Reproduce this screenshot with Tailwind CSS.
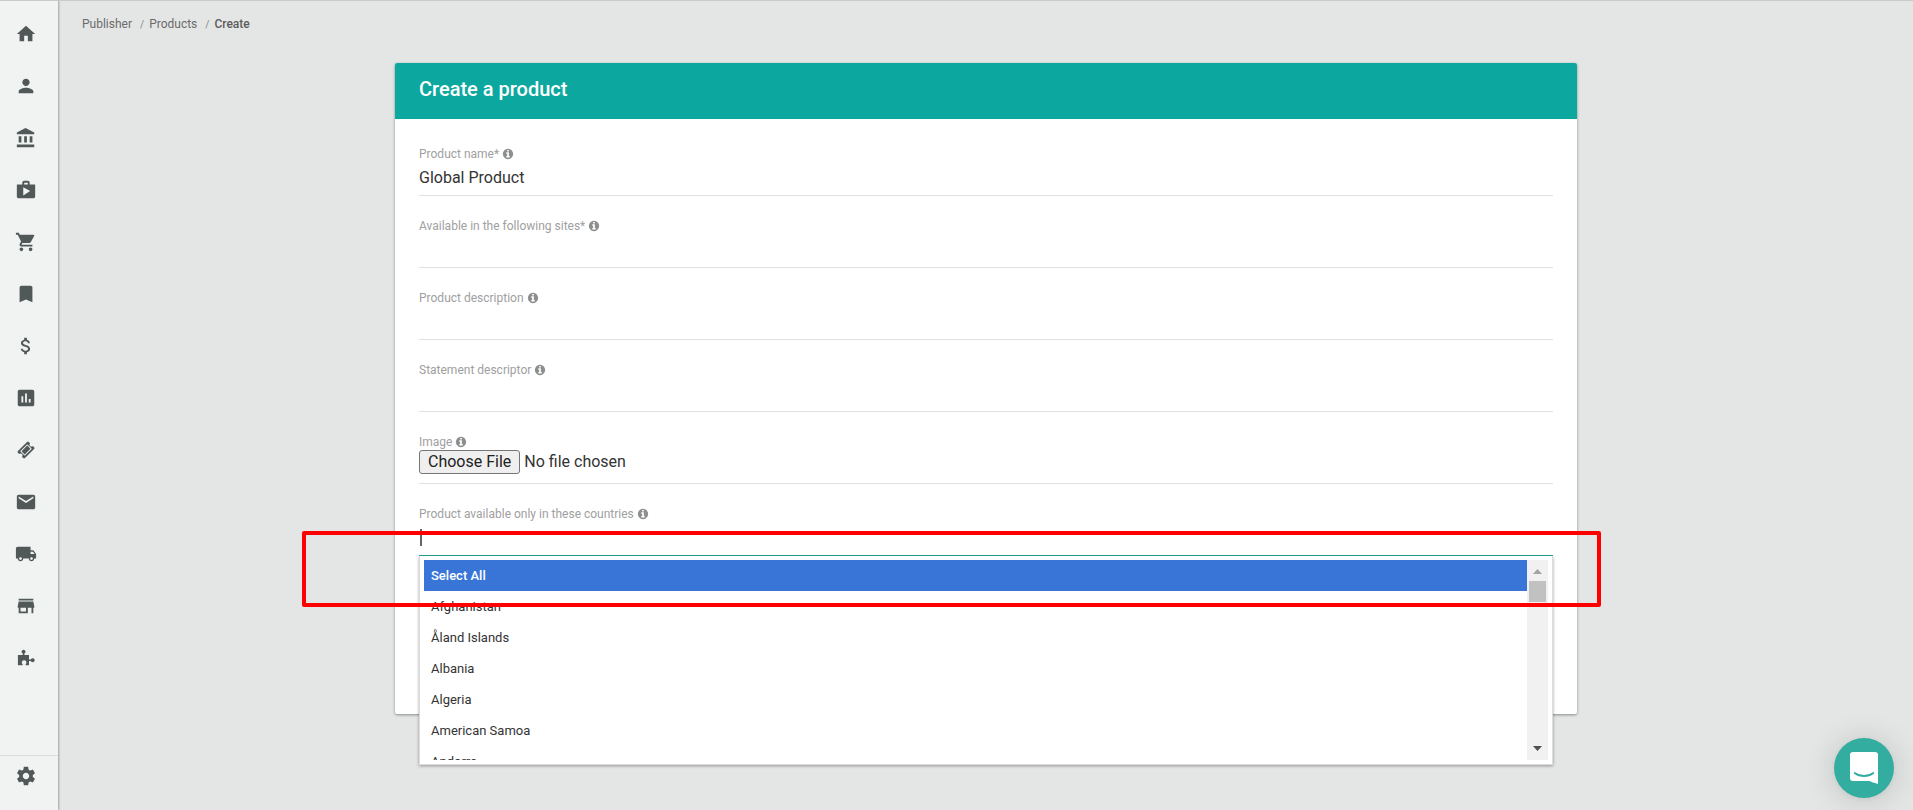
<!DOCTYPE html>
<html lang="en">
<head>
    <meta charset="UTF-8">
    <meta name="viewport" content="width=device-width, initial-scale=1.0">
    <title>Create a product</title>
    <!-- Tailwind CSS CDN -->
    <script src="https://cdn.jsdelivr.net/npm/@tailwindcss/browser@4"></script>
</head>
<body class="flex h-screen overflow-hidden bg-[#e4e6e5] font-[Roboto,sans-serif] text-[#333]">

    <!-- Shared info icon -->
    <svg class="hidden">
        <symbol id="info" viewBox="0 0 1792 1792">
            <path d="M1152 1376v-160q0-14-9-23t-23-9h-96v-512q0-14-9-23t-23-9h-320q-14 0-23 9t-9 23v160q0 14 9 23t23 9h96v320h-96q-14 0-23 9t-9 23v160q0 14 9 23t23 9h448q14 0 23-9t9-23zm-128-896v-160q0-14-9-23t-23-9h-192q-14 0-23 9t-9 23v160q0 14 9 23t23 9h192q14 0 23-9t9-23zm640 416q0 209-103 385.5t-279.5 279.5-385.5 103-385.5-103-279.5-279.5-103-385.5 103-385.5 279.5-279.5 385.5-103 385.5 103 279.5 279.5 103 385.5z"/>
        </symbol>
    </svg>

    <!-- Line under the top bar -->
    <div class="fixed inset-x-0 top-0 z-30 h-px bg-[#c9cbca]"></div>

    <!-- Sidebar -->
    <nav class="flex w-[58px] shrink-0 flex-col bg-[#f1f3f2] pt-2 text-[#515958] shadow-[1px_0_2px_rgba(0,0,0,0.3)]">
        <a href="#" aria-label="Home" class="flex h-[52px] items-center pl-[15px]">
            <svg class="size-[22px]" viewBox="0 0 24 24" fill="currentColor"><path d="M10 20v-6h4v6h5v-8h3L12 3 2 12h3v8z"/></svg>
        </a>
        <a href="#" aria-label="Users" class="flex h-[52px] items-center pl-[15px]">
            <svg class="size-[22px]" viewBox="0 0 24 24" fill="currentColor"><path d="M12 12c2.21 0 4-1.79 4-4s-1.79-4-4-4-4 1.790-4 4 1.790 4 4 4zm0 2c-2.670 0-8 1.340-8 4v2h16v-2c0-2.660-5.330-4-8-4z"/></svg>
        </a>
        <a href="#" aria-label="Accounts" class="flex h-[52px] items-center pl-[15px]">
            <svg class="size-[22px]" viewBox="0 0 24 24" fill="currentColor"><path d="M4 10v7h3v-7H4zm6 0v7h3v-7h-3zM2 22h19v-3H2v3zm14-12v7h3v-7h-3zm-4.500-9L2 6v2h19V6l-9.500-5z"/></svg>
        </a>
        <a href="#" aria-label="Shop" class="flex h-[52px] items-center pl-[15px]">
            <svg class="size-[22px]" viewBox="0 0 24 24" fill="currentColor"><path d="M16 6V4c0-1.110-.89-2-2-2h-4c-1.110 0-2 .89-2 2v2H2v13c0 1.110.89 2 2 2h16c1.110 0 2-.89 2-2V6h-6zm-6-2h4v2h-4V4zM9 18V9l7.500 4L9 18z"/></svg>
        </a>
        <a href="#" aria-label="Cart" class="flex h-[52px] items-center pl-[15px]">
            <svg class="size-[22px]" viewBox="0 0 24 24" fill="currentColor"><path d="M7 18c-1.100 0-1.990.9-1.990 2S5.900 22 7 22s2-.9 2-2-.9-2-2-2zM1 2v2h2l3.600 7.590-1.350 2.450c-.16.28-.25.61-.25.96 0 1.100.9 2 2 2h12v-2H7.420c-.14 0-.25-.11-.25-.25l.03-.12.9-1.630h7.450c.75 0 1.410-.41 1.750-1.030l3.580-6.490A1.003 1.003 0 0020 4H5.210l-.94-2H1zm16 16c-1.100 0-1.990.9-1.990 2s.89 2 1.990 2 2-.9 2-2-.9-2-2-2z"/></svg>
        </a>
        <a href="#" aria-label="Bookmarks" class="flex h-[52px] items-center pl-[15px]">
            <svg class="size-[22px]" viewBox="0 0 24 24" fill="currentColor"><path d="M17 3H7c-1.100 0-1.990.9-1.990 2L5 21l7-3 7 3V5c0-1.100-.9-2-2-2z"/></svg>
        </a>
        <a href="#" aria-label="Payments" class="flex h-[52px] items-center pl-[15px]">
            <svg class="size-[22px]" viewBox="0 0 24 24" fill="currentColor"><path d="M11.800 10.900c-2.270-.59-3-1.200-3-2.150 0-1.090 1.010-1.850 2.700-1.850 1.780 0 2.440.85 2.500 2.100h2.210c-.07-1.720-1.120-3.300-3.210-3.810V3h-3v2.160c-1.940.42-3.500 1.680-3.500 3.610 0 2.310 1.910 3.460 4.700 4.130 2.500.6 3 1.480 3 2.410 0 .69-.49 1.790-2.700 1.790-2.060 0-2.870-.92-2.980-2.100h-2.200c.12 2.190 1.760 3.420 3.680 3.830V21h3v-2.150c1.950-.37 3.500-1.500 3.500-3.550 0-2.840-2.430-3.810-4.700-4.400z"/></svg>
        </a>
        <a href="#" aria-label="Reports" class="flex h-[52px] items-center pl-[15px]">
            <svg class="size-[22px]" viewBox="0 0 24 24" fill="currentColor"><path d="M19 3H5c-1.100 0-2 .9-2 2v14c0 1.100.9 2 2 2h14c1.100 0 2-.9 2-2V5c0-1.100-.9-2-2-2zM9 17H7v-7h2v7zm4 0h-2V7h2v10zm4 0h-2v-4h2v4z"/></svg>
        </a>
        <a href="#" aria-label="Vouchers" class="flex h-[52px] items-center pl-[17px]">
            <svg class="size-[18px]" viewBox="0 0 1792 1792" fill="currentColor"><path d="M1024 452l316 316-572 572-316-316zm-211 979l618-618q19-19 19-45t-19-45l-362-362q-18-18-45-18t-45 18l-618 618q-19 19-19 45t19 45l362 362q18 18 45 18t45-18zm889-637l-907 908q-37 37-90.500 37t-90.500-37l-126-126q56-56 56-136t-56-136-136-56-136 56l-125-126q-37-37-37-90.500t37-90.500l907-906q37-37 90.500-37t90.500 37l125 125q-56 56-56 136t56 136 136 56 136-56l126 125q37 37 37 90.500t-37 90.500z"/></svg>
        </a>
        <a href="#" aria-label="Mail" class="flex h-[52px] items-center pl-[15px]">
            <svg class="size-[22px]" viewBox="0 0 24 24" fill="currentColor"><path d="M20 4H4c-1.100 0-1.990.9-1.990 2L2 18c0 1.100.9 2 2 2h16c1.100 0 2-.9 2-2V6c0-1.100-.9-2-2-2zm0 4l-8 5-8-5V6l8 5 8-5v2z"/></svg>
        </a>
        <a href="#" aria-label="Shipping" class="flex h-[52px] items-center pl-[15px]">
            <svg class="size-[22px]" viewBox="0 0 24 24" fill="currentColor"><path d="M20 8h-3V4H3c-1.100 0-2 .9-2 2v11h2c0 1.660 1.340 3 3 3s3-1.340 3-3h6c0 1.660 1.340 3 3 3s3-1.340 3-3h2v-5l-3-4zM6 18.500c-.83 0-1.500-.67-1.500-1.500s.67-1.500 1.500-1.500 1.500.67 1.500 1.500-.67 1.500-1.500 1.500zm13.500-9l1.960 2.500H17V9.500h2.500zm-1.500 9c-.83 0-1.500-.67-1.500-1.500s.67-1.500 1.500-1.500 1.500.67 1.500 1.500-.67 1.500-1.500 1.500z"/></svg>
        </a>
        <a href="#" aria-label="Store" class="flex h-[52px] items-center pl-[15px]">
            <svg class="size-[22px]" viewBox="0 0 24 24" fill="currentColor"><path d="M20 4H4v2h16V4zm1 10v-2l-1-5H4l-1 5v2h1v6h10v-6h4v6h2v-6h1zm-9 4H6v-4h6v4z"/></svg>
        </a>
        <a href="#" aria-label="Add-ons" class="flex h-[52px] items-center pl-[17px]">
            <svg class="size-[18px]" viewBox="0 0 18 18" fill="currentColor"><path d="M6.600.7a2 2 0 0 1 .8 3.800V6H12v4.400h1.800a2 2 0 1 1 0 1.500H12V16.200H8.600v-.9c.5-.4.8-1 .8-1.700a2.300 2.300 0 0 0-4.600 0c0 .7.300 1.300.8 1.700v.9H.900V6h4.800V4.500a2 2 0 0 1 .9-3.800z"/></svg>
        </a>
        <div class="mt-auto border-t border-[#dcdedd] pb-[14px]">
            <a href="#" aria-label="Settings" class="flex h-10 items-center pl-[15px]">
                <svg class="size-[22px]" viewBox="0 0 24 24" fill="currentColor"><path d="M19.430 12.980c.04-.32.07-.64.07-.98s-.03-.66-.07-.98l2.110-1.650c.19-.15.24-.42.12-.64l-2-3.460c-.12-.22-.39-.3-.61-.22l-2.490 1c-.52-.4-1.080-.73-1.690-.98l-.38-2.650A.488.488 0 0014 2h-4c-.25 0-.46.18-.49.42l-.38 2.650c-.61.25-1.170.59-1.690.98l-2.490-1c-.23-.09-.49 0-.61.22l-2 3.460c-.13.22-.07.49.12.64l2.110 1.650c-.04.32-.07.65-.07.98s.03.66.07.98l-2.110 1.650c-.19.15-.24.42-.12.64l2 3.460c.12.22.39.3.61.22l2.490-1c.52.4 1.080.73 1.690.98l.38 2.650c.03.24.24.42.49.42h4c.25 0 .46-.18.49-.42l.38-2.650c.61-.25 1.170-.59 1.690-.98l2.490 1c.23.09.49 0 .61-.22l2-3.460c.12-.22.07-.49-.12-.64l-2.110-1.650zM12 15.500c-1.930 0-3.500-1.570-3.500-3.500s1.570-3.500 3.500-3.500 3.500 1.570 3.500 3.500-1.570 3.500-3.500 3.500z"/></svg>
            </a>
        </div>
    </nav>

    <main class="min-w-0 flex-1 pl-px">
        <!-- Breadcrumb -->
        <ol class="flex items-center pt-4 pl-[23px] text-xs text-[#6b6b6b]">
            <li><a href="#">Publisher</a></li>
            <li class="pt-0.5 pr-[5px] pl-2 text-[10px] text-[#888]">/</li>
            <li><a href="#">Products</a></li>
            <li class="pt-0.5 pr-[5px] pl-2 text-[10px] text-[#888]">/</li>
            <li class="font-medium text-[#5c5c5c]">Create</li>
        </ol>

        <!-- Form card -->
        <form class="mx-auto mt-[31px] w-full max-w-[1182px] rounded-xs bg-white pb-[158px] shadow-[0_1px_3px_rgba(0,0,0,0.4)]">
            <h1 class="rounded-t-xs bg-[#0ca89f] px-6 pt-3 pb-4 text-xl leading-7 font-medium text-white">Create a product</h1>

            <div class="px-6 pt-[5px]">
                <div class="pt-[22px]">
                    <label for="name" class="flex items-center gap-[3px] text-xs text-[#a0a0a0]">Product name* <svg class="size-3 fill-[#8d8f8e]"><use href="#info"/></svg></label>
                    <input id="name" type="text" value="Global Product" class="block h-[34px] w-full border-b border-[#e0e0e0] pb-0.5 text-base text-[#333] outline-none">
                </div>
                <div class="pt-[22px]">
                    <label for="sites" class="flex items-center gap-[3px] text-xs text-[#a0a0a0]">Available in the following sites* <svg class="size-3 fill-[#8d8f8e]"><use href="#info"/></svg></label>
                    <input id="sites" type="text" class="block h-[34px] w-full border-b border-[#e0e0e0] pb-0.5 text-base text-[#333] outline-none">
                </div>
                <div class="pt-[22px]">
                    <label for="description" class="flex items-center gap-[3px] text-xs text-[#a0a0a0]">Product description <svg class="size-3 fill-[#8d8f8e]"><use href="#info"/></svg></label>
                    <input id="description" type="text" class="block h-[34px] w-full border-b border-[#e0e0e0] pb-0.5 text-base text-[#333] outline-none">
                </div>
                <div class="pt-[22px]">
                    <label for="descriptor" class="flex items-center gap-[3px] text-xs text-[#a0a0a0]">Statement descriptor <svg class="size-3 fill-[#8d8f8e]"><use href="#info"/></svg></label>
                    <input id="descriptor" type="text" class="block h-[34px] w-full border-b border-[#e0e0e0] pb-0.5 text-base text-[#333] outline-none">
                </div>
                <div class="pt-[22px]">
                    <label for="image" class="flex items-center gap-[3px] text-xs text-[#a0a0a0]">Image <svg class="size-3 fill-[#8d8f8e]"><use href="#info"/></svg></label>
                    <input id="image" type="file" class="block h-[34px] w-full border-b border-[#e0e0e0] text-base leading-[22px] text-[#333] file:mr-1 file:h-6 file:rounded-[3px] file:border file:border-solid file:border-[#767676] file:bg-[#efefef] file:px-2 file:text-[#222]">
                </div>
                <div class="relative pt-[22px]">
                    <label for="countries" class="flex items-center gap-[3px] text-xs text-[#a0a0a0]">Product available only in these countries <svg class="size-3 fill-[#8d8f8e]"><use href="#info"/></svg></label>
                    <input id="countries" type="text" class="block h-[34px] w-full border-b border-[#26a69a] pb-0.5 text-base text-[#333] outline-none">
                    <span class="absolute bottom-[10px] left-px h-[17px] w-0.5 bg-[#666]"></span>

                    <!-- Country dropdown -->
                    <div class="absolute inset-x-0 top-full z-10 flex border border-t-0 border-[#dcdcdc] bg-white p-1 shadow-[0_1px_3px_rgba(0,0,0,0.35)]">
                        <ul role="listbox" aria-label="Countries" class="h-[200px] flex-1 overflow-hidden text-[13px] leading-[31px] text-[#333]">
                            <li role="option" aria-selected="true" class="bg-[#3875d7] px-[7px] font-medium text-white">Select All</li>
                            <li role="option" class="px-[7px]">Afghanistan</li>
                            <li role="option" class="px-[7px]">Åland Islands</li>
                            <li role="option" class="px-[7px]">Albania</li>
                            <li role="option" class="px-[7px]">Algeria</li>
                            <li role="option" class="px-[7px]">American Samoa</li>
                            <li role="option" class="px-[7px]">Andorra</li>
                        </ul>
                        <div class="flex w-[21px] flex-col items-center bg-[#f1f1f1]">
                            <svg class="h-[21px] w-[9px] fill-[#a3a3a3]" viewBox="0 0 9 21"><path d="M0 14h9L4.500 9z"/></svg>
                            <div class="h-[21px] w-[17px] bg-[#c1c1c1]"></div>
                            <svg class="mt-auto h-[21px] w-[9px] fill-[#505050]" viewBox="0 0 9 21"><path d="M0 7h9l-4.500 5z"/></svg>
                        </div>
                    </div>

                    <!-- Highlight frame -->
                    <div class="pointer-events-none absolute top-[47px] -right-12 -left-[117px] z-20 h-[76px] rounded-xs border-4 border-[#ff0000]"></div>
                </div>
            </div>
        </form>
    </main>

    <!-- Chat launcher -->
    <button type="button" aria-label="Open chat" class="fixed right-[19px] bottom-3 flex size-[60px] items-center justify-center rounded-full bg-[#33ada0] shadow-[0_2px_32px_rgba(0,0,0,0.16),0_1px_6px_rgba(0,0,0,0.06)]">
        <svg class="h-8 w-7" viewBox="0 0 28 32"><path fill="#fff" d="M28 32s-4.700-1.200-8.800-2.900H3a3 3 0 0 1-3-3V3a3 3 0 0 1 3-3h22a3 3 0 0 1 3 3z"/><path fill="none" stroke="#33ada0" stroke-width="1.800" stroke-linecap="round" d="M4.700 21c5.300 4 13.300 4 18.600 0"/></svg>
    </button>

</body>
</html>
